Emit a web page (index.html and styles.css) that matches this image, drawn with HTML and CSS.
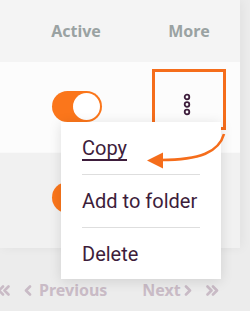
FILE: index.html
```html
<!DOCTYPE html>
<html lang="en">
<head>
    <title>Row actions</title>
    <meta charset="utf-8">
    <meta name="viewport" content="width=device-width, initial-scale=1">
    <link rel="stylesheet" href="styles.css">
</head>
<body>
    <div class="panel">
        <div class="row head">
            <span></span>
            <span class="col-title">Active</span>
            <span></span>
            <span class="col-title">More</span>
        </div>
        <div class="row first">
            <span></span>
            <span class="toggle"><span class="knob"></span></span>
            <span></span>
            <button class="more highlight">
                <svg width="8" height="23" viewBox="0 0 8 23"><circle cx="4" cy="4" r="2.3"/><circle cx="4" cy="11.5" r="2.3"/><circle cx="4" cy="19" r="2.3"/></svg>
            </button>
        </div>
        <div class="row second">
            <span></span>
            <span class="toggle"><span class="knob"></span></span>
            <span></span>
            <button class="more">
                <svg width="8" height="23" viewBox="0 0 8 23"><circle cx="4" cy="4" r="2.3"/><circle cx="4" cy="11.5" r="2.3"/><circle cx="4" cy="19" r="2.3"/></svg>
            </button>
        </div>
    </div>

    <nav class="pager">
        <svg class="chev dbl" width="13" height="11" viewBox="0 0 13 11"><path d="M6 1.5 2 5.5 6 9.5M11.5 1.5 7.5 5.5 11.5 9.5"/></svg>
        <svg class="chev single" width="8" height="11" viewBox="0 0 8 11"><path d="M6 1.5 2 5.5 6 9.5"/></svg>
        <span class="label prev">Previous</span>
        <span class="label next">Next</span>
        <svg class="chev" width="8" height="11" viewBox="0 0 8 11"><path d="M2 1.5 6 5.5 2 9.5"/></svg>
        <svg class="chev dbl last" width="13" height="11" viewBox="0 0 13 11"><path d="M1.5 1.5 5.5 5.5 1.5 9.5M7 1.5 11 5.5 7 9.5"/></svg>
    </nav>

    <ul class="menu">
        <li class="current">Copy</li>
        <li>Add to folder</li>
        <li>Delete</li>
    </ul>

    <svg class="pointer" width="250" height="311" viewBox="0 0 250 311">
        <path d="M224 134 C219 152 200 160 161 160" fill="none" stroke="#f56d1b" stroke-width="2.6"/>
        <polygon points="147,160.5 163,152.5 163,168.5" fill="#f56d1b"/>
    </svg>
</body>
</html>
```

FILE: styles.css
```css
* {
    box-sizing: border-box;
    margin: 0;
    padding: 0;
}

body {
    width: 250px;
    height: 311px;
    overflow: hidden;
    background: #ececec;
    font-family: "Noto Sans", Lato, sans-serif;
    position: relative;
}

.panel {
    width: 240px;
    background: #f4f4f4;
    box-shadow: 2px 0 10px rgba(0, 0, 0, 0.05);
}

.row {
    display: grid;
    grid-template-columns: 36px 80px 1fr 74px;
    padding-right: 14px;
}

.head {
    height: 62px;
    align-items: center;
    background: #f4f4f4;
}

.col-title {
    text-align: center;
    font-size: 16px;
    font-weight: 700;
    color: #9aa2a2;
}

.first {
    height: 91px;
    background: #fcfcfc;
    border-bottom: 1px solid #f9f9f9;
}

.second {
    height: 95px;
    background: #f1f1f1;
}

.toggle {
    justify-self: center;
    margin: 29px 0 0 2px;
    width: 50px;
    height: 31px;
    border-radius: 16px;
    background: #fb761b;
    display: flex;
    justify-content: flex-end;
    align-items: center;
    padding-right: 2px;
}

.knob {
    width: 27px;
    height: 27px;
    border-radius: 50%;
    background: #fff;
}

.more {
    align-self: start;
    margin-top: 7px;
    height: 61px;
    border: 3px solid transparent;
    background: none;
    display: flex;
    justify-content: center;
    align-items: center;
    padding: 10px 4px 0 0;
}

.more svg circle {
    fill: none;
    stroke: #3d1d3b;
    stroke-width: 1.8;
}

.highlight {
    border-color: #f56d1b;
}

.pager {
    display: flex;
    align-items: center;
    height: 62px;
    padding-top: 22px;
    font-size: 16px;
    font-weight: 700;
    color: #c9bbc6;
    white-space: nowrap;
}

.chev path {
    fill: none;
    stroke: #c9bbc6;
    stroke-width: 2.6;
    stroke-linecap: round;
    stroke-linejoin: round;
}

.dbl {
    margin-left: -3px;
}

.single {
    margin-left: 14px;
}

.prev {
    margin-left: 7px;
}

.next {
    margin-left: 35px;
    margin-right: 3px;
}

.last {
    margin-left: 14px;
}

.menu {
    position: absolute;
    left: 61px;
    top: 122px;
    width: 160px;
    list-style: none;
    background: #fff;
    box-shadow: 0 2px 12px rgba(0, 0, 0, 0.12);
    font-family: Roboto, "Noto Sans", sans-serif;
    font-size: 20px;
    color: #3d1d3b;
}

.menu li {
    margin: 0 21px;
    padding: 15px 0 14px;
    line-height: 23px;
    border-bottom: 1px solid #dedede;
}

.menu li:last-child {
    border-bottom: none;
    padding-bottom: 13px;
}

.current {
    text-decoration: underline;
    text-underline-offset: 4px;
    text-decoration-thickness: 1.5px;
}

.pointer {
    position: absolute;
    left: 0;
    top: 0;
}
```
